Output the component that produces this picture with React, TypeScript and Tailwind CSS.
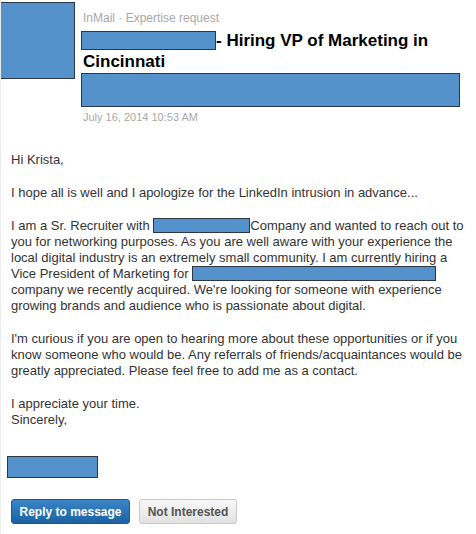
import React from 'react';

const Redact: React.FC<{ className?: string }> = ({ className = '' }) => (
  <span className={`inline-block bg-[#5591cb] border border-[#2b3744] align-middle ${className}`}></span>
);

const App: React.FC = () => {
  return (
    <div className="w-[476px] h-[534px] bg-white border-l border-[#ececec] font-['Liberation_Sans',Arial,sans-serif] text-[#333] overflow-hidden">
      {/* Header */}
      <div className="flex pt-[2px]">
        <div className="w-[74px] h-[77px] bg-[#5591cb] border border-[#2b3744] border-l-0 shrink-0"></div>
        <div className="ml-[6px] flex flex-col">
          <div className="text-[12px] leading-[15px] text-[#a8a8a8] mt-[9px] ml-[2px]">InMail · Expertise request</div>
          <div className="text-[17px] leading-[21px] font-bold text-black mt-[4px]">
            <Redact className="w-[135px] h-[19px] -mt-[3px]" />- Hiring VP of Marketing in
            <br />
            <span className="ml-[2px]">Cincinnati</span>
          </div>
          <Redact className="w-[379px] h-[34px] mt-[1px] block" />
          <div className="text-[11px] leading-[14px] text-[#a8a8a8] mt-[3px] ml-[2px]">July 16, 2014 10:53 AM</div>
        </div>
      </div>

      {/* Body */}
      <div className="pl-[10px] mt-[28px] text-[13px] leading-[16px] whitespace-nowrap">
        <p>Hi Krista,</p>
        <p className="mt-[17px]">I hope all is well and I apologize for the LinkedIn intrusion in advance...</p>
        <p className="mt-[17px]">
          I am a Sr. Recruiter with <Redact className="w-[97px] h-[15px] -mt-[2px]" />Company and wanted to reach out to
          <br />
          you for networking purposes. As you are well aware with your experience the
          <br />
          local digital industry is an extremely small community. I am currently hiring a
          <br />
          Vice President of Marketing for <Redact className="w-[244px] h-[15px] -mt-[2px]" />
          <br />
          company we recently acquired. We're looking for someone with experience
          <br />
          growing brands and audience who is passionate about digital.
        </p>
        <p className="mt-[17px]">
          I'm curious if you are open to hearing more about these opportunities or if you
          <br />
          know someone who would be. Any referrals of friends/acquaintances would be
          <br />
          greatly appreciated. Please feel free to add me as a contact.
        </p>
        <p className="mt-[17px]">
          I appreciate your time.
          <br />
          Sincerely,
        </p>
      </div>

      <div className="pl-[6px] mt-[26px]">
        <Redact className="w-[91px] h-[22px] block" />
      </div>

      {/* Actions */}
      <div className="flex gap-[9px] pl-[10px] mt-[21px]">
        <button className="h-[25px] w-[119px] rounded-[3px] bg-gradient-to-b from-[#3a86c6] to-[#1c62a3] border border-[#1a5a94] text-white text-[12px] font-bold">
          Reply to message
        </button>
        <button className="h-[25px] w-[98px] rounded-[3px] bg-gradient-to-b from-[#f8f8f8] to-[#e2e2e2] border border-[#c8c8c8] text-[#555] text-[12px] font-bold">
          Not Interested
        </button>
      </div>
    </div>
  );
};

export default App;
